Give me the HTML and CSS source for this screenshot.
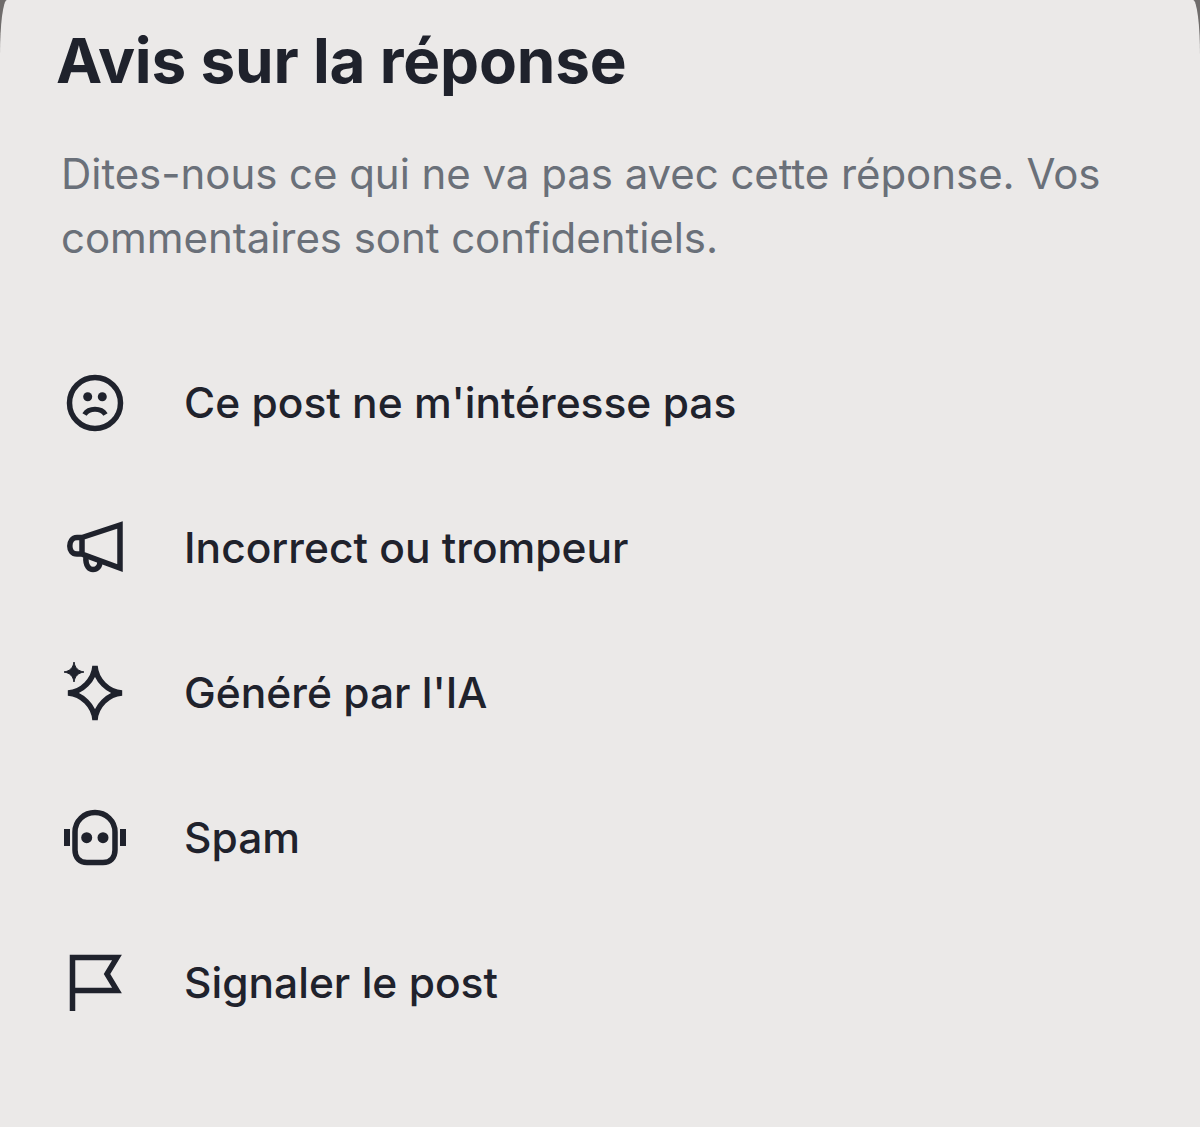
FILE: index.html
```html
<!DOCTYPE html>
<html lang="fr">

<head>
    <meta charset="UTF-8">
    <meta name="viewport" content="width=device-width, initial-scale=1.0">
    <title>Avis sur la réponse</title>
    <link rel="stylesheet" href="styles.css">
</head>

<body>
    <div class="sheet">
        <h2>Avis sur la réponse</h2>
        <p class="intro">Dites-nous ce qui ne va pas avec cette réponse. Vos commentaires sont confidentiels.</p>
        <ul class="options">
            <li>
                <svg class="icon" viewBox="0 0 66 66">
                    <circle cx="33" cy="33" r="25.5" fill="none" stroke="currentColor" stroke-width="5.500" />
                    <circle cx="25.700" cy="26.700" r="4.500" fill="currentColor" />
                    <circle cx="40.300" cy="26.700" r="4.500" fill="currentColor" />
                    <path d="M22.500 44.500 C27 37.500 39 37.500 43.500 44.500" fill="none" stroke="currentColor" stroke-width="5" />
                </svg>
                <span>Ce post ne m'intéresse pas</span>
            </li>
            <li>
                <svg class="icon" viewBox="0 0 66 66">
                    <path d="M20 22.500 L58 10 V53 L20 39 Z M20 22.500 H15 C10 22.500 7.800 27 7.800 31 C7.800 35 10 39 15 39 H20" fill="none" stroke="currentColor" stroke-width="5.500" />
                    <path d="M24 41 C23 52 28 54.500 31 54.500 C35 54.500 38 52 38 46" fill="none" stroke="currentColor" stroke-width="5.500" />
                </svg>
                <span>Incorrect ou trompeur</span>
            </li>
            <li>
                <svg class="icon" viewBox="0 0 66 66">
                    <path d="M33 6 C34 20 46 32 60 33 C46 34 34 46 33 60 C32 46 20 34 6 33 C20 32 32 20 33 6 Z" fill="none" stroke="currentColor" stroke-width="5.500" stroke-linejoin="bevel" />
                    <path d="M12 2 C13 8 16 11 22 12 C16 13 13 16 12 22 C11 16 8 13 2 12 C8 11 11 8 12 2 Z" fill="currentColor" stroke="currentColor" stroke-width="1" />
                </svg>
                <span>Généré par l'IA</span>
            </li>
            <li>
                <svg class="icon" viewBox="0 0 66 66">
                    <path d="M33 7.500 C44 7.500 53 16 53 27 V45 C53 53 48 57.500 41 57.500 H25 C18 57.500 13 53 13 45 V27 C13 16 22 7.500 33 7.500 Z" fill="none" stroke="currentColor" stroke-width="5.500" />
                    <circle cx="24.700" cy="32.700" r="5.500" fill="currentColor" />
                    <circle cx="41" cy="32.700" r="5.500" fill="currentColor" />
                    <rect x="2" y="24" width="6" height="17" fill="currentColor" />
                    <rect x="58" y="24" width="6" height="17" fill="currentColor" />
                </svg>
                <span>Spam</span>
            </li>
            <li>
                <svg class="icon" viewBox="0 0 66 66">
                    <path d="M10.500 61 V7.500 H55 L45 24 L55 40.500 H10.500" fill="none" stroke="currentColor" stroke-width="5.500" />
                </svg>
                <span>Signaler le post</span>
            </li>
        </ul>
    </div>
</body>

</html>
```

FILE: styles.css
```css
body {
  font-family: Inter, 'Liberation Sans', sans-serif;
  background-color: #6f6c6b;
  color: #1f222c;
  margin: 0;
}
.sheet {
  box-sizing: border-box;
  height: 1127px;
  padding: 28px 56px 0 62px;
  background-color: #ebe9e8;
  border-top-left-radius: 7px 55px;
  border-top-right-radius: 7px 55px;
  overflow: hidden;
}
h2 {
  margin: 0 0 0 -6px;
  font-size: 62px;
  line-height: 66px;
  font-weight: 700;
  letter-spacing: -0.2px;
}
.intro {
  margin: 48px 0 0 -1px;
  font-size: 42px;
  line-height: 64px;
  letter-spacing: -0.05px;
  color: #6a7079;
}
.options {
  list-style-type: none;
  margin: 60px 0 0;
  padding: 0;
}
.options li {
  display: flex;
  align-items: center;
  gap: 56px;
  height: 145px;
  font-size: 42.5px;
  font-weight: 500;
}
.icon {
  flex-shrink: 0;
  width: 66px;
  height: 66px;
}
```
